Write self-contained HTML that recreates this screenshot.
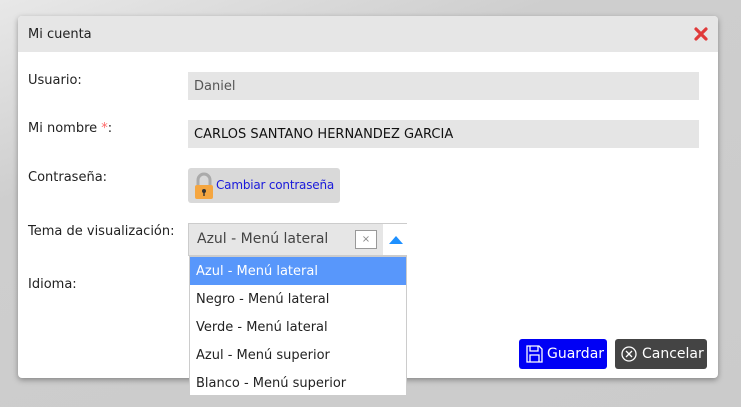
<!DOCTYPE html>
<html><head><style>
body{margin:0;width:741px;height:407px;background:linear-gradient(160deg,#e8e8e8 0%,#cecece 30%,#cbcbcb 100%);font-family:"DejaVu Sans","Liberation Sans",sans-serif;font-size:13px;color:#222;position:relative;overflow:hidden}
.dlg{position:absolute;left:18px;top:16px;width:700px;height:362px;background:#fff;border-radius:4px;box-shadow:0 2px 6px rgba(0,0,0,.35);overflow:hidden}
.hd{height:36px;background:#e6e6e6;line-height:38px;padding-left:10px;font-size:13px}
.a{position:absolute;white-space:nowrap}
.lbl{left:28px}
.inp{left:188px;width:511px;height:28px;background:#e5e5e5;line-height:30px;padding-left:6px;box-sizing:border-box}
.btn{border-radius:3px;color:#fff;height:30px;line-height:30px;font-size:14px}
.dd{left:189px;top:256px;width:218px;height:140px;background:#fff;border:1px solid #ccc;box-sizing:border-box}
.dd div{height:28px;line-height:29px;padding-left:6px}
</style></head><body>
<div class="dlg"><div class="hd">Mi cuenta</div>
<svg class="a" style="right:10px;top:11px" width="14" height="14"><path d="M2 2L12 12M12 2L2 12" stroke="#e03a3a" stroke-width="3.2" stroke-linecap="round"/></svg></div>
<div class="a lbl" style="top:73px">Usuario:</div>
<div class="a inp" style="top:72px;color:#555">Daniel</div>
<div class="a lbl" style="top:121px">Mi nombre <span style="color:#f66">*</span>:</div>
<div class="a inp" style="top:120px;color:#111">CARLOS SANTANO HERNANDEZ GARCIA</div>
<div class="a lbl" style="top:170px">Contraseña:</div>
<div class="a" style="left:188px;top:168px;width:152px;height:35px;background:#d9d9d9;border-radius:3px">
<svg class="a" style="left:5px;top:4px" width="22" height="28" viewBox="0 0 22 28"><path d="M5 13V8a6 6 0 0 1 12 0v5" fill="none" stroke="#aaa" stroke-width="3"/><rect x="2" y="13" width="18" height="14" rx="2" fill="#f5a640"/><circle cx="11" cy="19" r="2" fill="#333"/><rect x="10.3" y="19" width="1.4" height="5" fill="#333"/></svg>
<span class="a" style="left:28px;top:10px;color:#1a1adb;font-size:12px;letter-spacing:-0.2px">Cambiar contraseña</span></div>
<div class="a lbl" style="top:224px">Tema de visualización:</div>
<div class="a" style="left:188px;top:223px;width:219px;height:33px;border:1px solid #ccc;box-sizing:border-box;background:#e6e6e6">
<span class="a" style="left:8px;top:7px;color:#444;font-size:14px">Azul - Menú lateral</span>
<span class="a" style="left:166px;top:6px;width:20px;height:17px;border:1px solid #999;background:#fff;font-size:10px;color:#888;text-align:center;line-height:17px">×</span>
<span class="a" style="left:194px;top:0;width:24px;height:31px;background:#fff"></span>
<svg class="a" style="left:200px;top:11px" width="14" height="9"><path d="M0 9L7 1L14 9Z" fill="#1e90ff"/></svg></div>
<div class="a lbl" style="top:277px">Idioma:</div>
<div class="a dd"><div style="background:#5897fb;color:#fff">Azul - Menú lateral</div><div>Negro - Menú lateral</div><div>Verde - Menú lateral</div><div>Azul - Menú superior</div><div>Blanco - Menú superior</div></div>
<div class="a btn" style="left:519px;top:339px;width:88px;background:#0000f5">
<svg class="a" style="left:7px;top:6px" width="17" height="18" viewBox="0 0 17 18"><path d="M1 1h12l3 3v13H1z M4 1v5h8V1 M4 17v-7h9v7" fill="none" stroke="#fff" stroke-width="1.3"/></svg>
<span class="a" style="left:28px;top:0">Guardar</span></div>
<div class="a btn" style="left:615px;top:339px;width:92px;background:#444">
<svg class="a" style="left:6px;top:7px" width="16" height="16"><circle cx="8" cy="8" r="7" fill="none" stroke="#fff" stroke-width="1.3"/><path d="M5 5l6 6M11 5l-6 6" stroke="#fff" stroke-width="1.3"/></svg>
<span class="a" style="left:27px;top:0">Cancelar</span></div>
</body></html>
